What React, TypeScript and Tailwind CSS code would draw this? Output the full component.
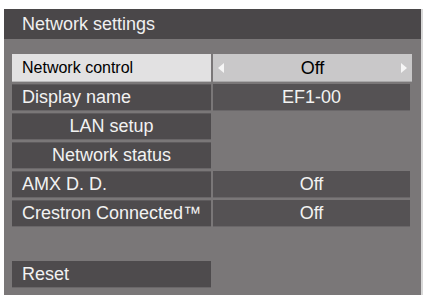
import React from 'react';

type Row = { label: string; value?: string; center?: boolean; active?: boolean };

const rows: Row[] = [
  { label: 'Network control', value: 'Off', active: true },
  { label: 'Display name', value: 'EF1-00' },
  { label: 'LAN setup', center: true },
  { label: 'Network status', center: true },
  { label: 'AMX D. D.', value: 'Off' },
  { label: 'Crestron Connected™', value: 'Off' },
];

const font = { fontFamily: '"Liberation Sans", Arial, sans-serif' };

function MenuRow({ row }: { row: Row }) {
  if (row.active) {
    return (
      <div className="flex h-[28px] gap-[2px]">
        <div className="flex w-[199px] items-center bg-[#e2e1e2] pl-[10px] text-[16px] text-black shadow-[inset_0_-1px_0_#b9b8b9]">
          {row.label}
        </div>
        <div className="relative flex w-[199px] items-center justify-center bg-[#c9c8c9] text-[18px] text-black shadow-[inset_0_-1px_0_#a9a8a9]">
          <span className="absolute left-[5px] top-[9px] h-0 w-0 border-y-[5px] border-r-[6px] border-y-transparent border-r-[#f6f6f6]" />
          {row.value}
          <span className="absolute right-[5px] top-[9px] h-0 w-0 border-y-[5px] border-l-[6px] border-y-transparent border-l-[#f6f6f6]" />
        </div>
      </div>
    );
  }
  return (
    <div className="flex h-[27px] gap-[2px]">
      <div
        className={`flex w-[199px] items-center bg-[#4e4b4d] text-[18px] text-[#f2f2f2] shadow-[inset_0_-1px_0_#6a6769,inset_0_1px_0_#5e5b5d] ${
          row.center ? 'justify-center' : 'pl-[10px]'
        }`}
      >
        {row.label}
      </div>
      {row.value && (
        <div className="flex w-[197px] items-center justify-center bg-[#555254] text-[18px] text-[#f2f2f2] shadow-[inset_0_-1px_0_#6a6769]">
          {row.value}
        </div>
      )}
    </div>
  );
}

export default function App() {
  return (
    <div className="h-[298px] w-[426px] bg-white pl-[4px] pt-[9px]" style={font}>
      <div className="flex h-[286px] w-[419px] flex-col border-r-[2px] border-[#d8d8d8] bg-[#7a7778]">
        <div className="flex h-[30px] items-center bg-[#4a4749] pl-[18px] text-[18px] text-[#f0f0f0]">
          Network settings
        </div>
        <div className="flex flex-col gap-[2px] pl-[8px] pt-[15px]">
          {rows.map((r) => (
            <MenuRow key={r.label} row={r} />
          ))}
          <div className="h-[30px]" />
          <div className="flex h-[27px] w-[199px] items-center bg-[#4e4b4d] pl-[10px] text-[18px] text-[#f2f2f2] shadow-[inset_0_-1px_0_#6a6769]">
            Reset
          </div>
        </div>
      </div>
    </div>
  );
}
